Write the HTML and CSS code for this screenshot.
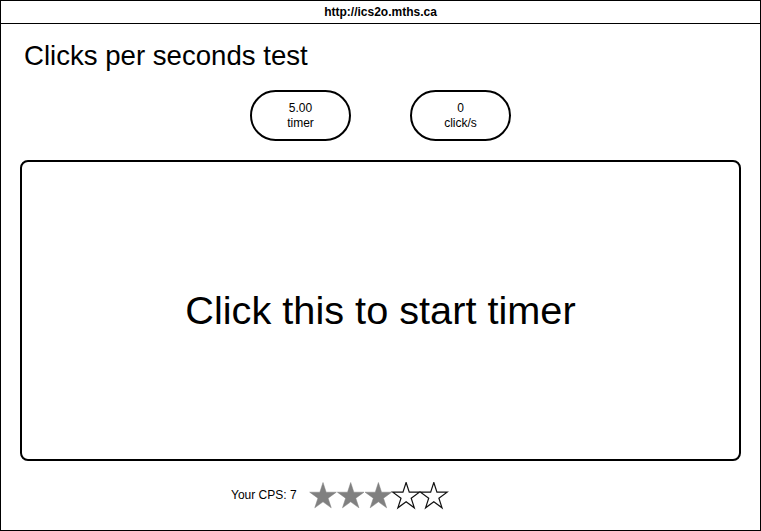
FILE: index.html
```html
<!DOCTYPE html>
<html>
<head>
<meta charset="utf-8">
<link rel="stylesheet" href="styles.css">
</head>
<body>
<div class="frame">
  <div class="urlbar">http://ics2o.mths.ca</div>
  <h1 class="title">Clicks per seconds test</h1>
  <div class="stats">
    <div class="pill"><span>5.00</span><span>timer</span></div>
    <div class="pill"><span>0</span><span>click/s</span></div>
  </div>
  <div class="area-wrap">
    <div class="area">Click this to start timer</div>
  </div>
  <div class="result">
    <span class="cps">Your CPS: 7</span>
    <svg class="stars" width="140" height="28" viewBox="0 0 140 28">
      <defs>
        <polygon id="star" points="0,-14 3.145,-4.328 13.315,-4.326 5.088,1.653 8.229,11.326 0,5.35 -8.229,11.326 -5.088,1.653 -13.315,-4.326 -3.145,-4.328"/>
      </defs>
      <use href="#star" x="14" y="14.5" class="full"/>
      <use href="#star" x="41.7" y="14.5" class="full"/>
      <use href="#star" x="69.4" y="14.5" class="full"/>
      <use href="#star" x="97.1" y="14.5" class="empty"/>
      <use href="#star" x="124.8" y="14.5" class="empty"/>
    </svg>
  </div>
</div>
</body>
</html>
```
FILE: styles.css
```css
html, body {
  margin: 0;
  padding: 0;
  background: #fff;
}
body {
  font-family: "Liberation Sans", Arial, sans-serif;
  color: #000;
}
.frame {
  width: 761px;
  height: 531px;
  box-sizing: border-box;
  border: 1px solid #000;
  display: flex;
  flex-direction: column;
}
.urlbar {
  height: 22px;
  border-bottom: 1px solid #000;
  font-size: 12px;
  font-weight: bold;
  display: flex;
  align-items: center;
  justify-content: center;
}
.title {
  margin: 16px 0 0 23px;
  font-size: 27.6px;
  font-weight: normal;
  line-height: 32px;
  height: 32px;
}
.stats {
  margin-top: 18px;
  display: flex;
  justify-content: center;
  gap: 59px;
}
.pill {
  width: 101px;
  height: 51px;
  box-sizing: border-box;
  border: 2px solid #000;
  border-radius: 26px;
  display: flex;
  flex-direction: column;
  align-items: center;
  justify-content: center;
  font-size: 12px;
  line-height: 15px;
}
.area-wrap {
  margin-top: 19px;
  padding: 0 19px;
}
.area {
  height: 301px;
  box-sizing: border-box;
  border: 2px solid #000;
  border-radius: 8px;
  display: flex;
  align-items: center;
  justify-content: center;
  font-size: 39.7px;
}
.result {
  margin-top: 21px;
  padding-left: 230px;
  display: flex;
  align-items: center;
  gap: 12px;
}
.cps {
  font-size: 12px;
  padding-bottom: 3px;
}
.stars .full {
  fill: #808080;
  stroke: #808080;
  stroke-width: 0.5;
}
.stars .empty {
  fill: #fff;
  stroke: #111;
  stroke-width: 1.2;
}
```
